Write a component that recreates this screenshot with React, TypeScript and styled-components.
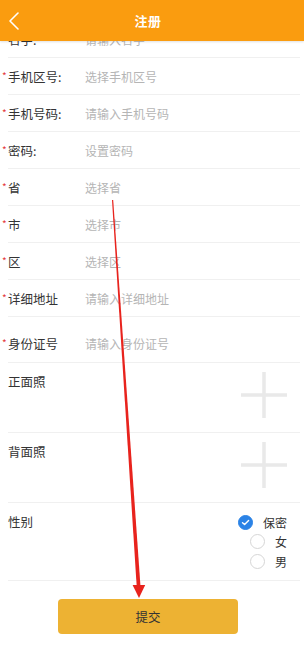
import React, { useState } from "react";
import styled, { createGlobalStyle } from "styled-components";

const GlobalStyle = createGlobalStyle`
  html, body {
    margin: 0;
    padding: 0;
    background: #fff;
  }
  body {
    font-family: "Noto Sans CJK SC", "Noto Sans", sans-serif;
    color: #333;
  }
  * {
    box-sizing: border-box;
  }
`;

const Page = styled.div`
  position: relative;
  width: 304px;
  height: 645px;
  overflow: hidden;
  background: #fff;
`;

const Header = styled.header`
  position: absolute;
  top: 0;
  left: 0;
  right: 0;
  height: 41px;
  z-index: 2;
  display: flex;
  align-items: center;
  justify-content: center;
  padding-right: 8px;
  background: #fa9c0f;
  box-shadow: 0 1px 2px rgba(0, 0, 0, 0.12);

  .title {
    color: #fff;
    font-size: 13px;
    font-weight: 700;
    letter-spacing: 0.5px;
  }
`;

const BackButton = styled.button`
  position: absolute;
  left: 5px;
  top: 9px;
  width: 20px;
  height: 24px;
  padding: 0;
  border: none;
  background: none;
  cursor: pointer;
`;

const Form = styled.div`
  padding-top: 21px;
`;

const Row = styled.div<{ tall?: boolean }>`
  display: flex;
  align-items: center;
  height: ${({ tall }) => (tall ? 46 : 37)}px;
  padding-top: ${({ tall }) => (tall ? 8 : 0)}px;
  margin: 0 4px 0 8px;
  border-bottom: 1px solid #f0f0f0;
`;

const Label = styled.label`
  position: relative;
  flex: 0 0 77px;
  font-size: 12.5px;
  color: #333;
  white-space: nowrap;
`;

const Star = styled.span`
  position: absolute;
  left: -6px;
  top: 1px;
  font-size: 10px;
  color: #e4393c;
`;

const Field = styled.input`
  flex: 1;
  min-width: 0;
  padding: 0;
  border: none;
  outline: none;
  background: transparent;
  font-family: inherit;
  font-size: 12px;
  color: #333;

  &::placeholder {
    color: #b5b5b5;
  }
`;

const BlockRow = styled.div<{ h: number }>`
  display: flex;
  justify-content: space-between;
  align-items: flex-start;
  height: ${({ h }) => h}px;
  margin: 0 4px 0 8px;
  border-bottom: 1px solid #f0f0f0;
`;

const BlockLabel = styled.span`
  padding-top: 10px;
  font-size: 12.5px;
  line-height: 18px;
  color: #333;
`;

const Upload = styled.button`
  width: 46px;
  height: 46px;
  margin: 9px 13px 0 0;
  padding: 0;
  border: none;
  background: none;
  cursor: pointer;
`;

const RadioGroup = styled.div`
  display: flex;
  flex-direction: column;
  align-items: flex-end;
  margin: 9.5px 13px 0 0;
`;

const RadioItem = styled.div`
  display: flex;
  align-items: center;
  height: 19.5px;
  font-size: 12px;
  color: #333;
  cursor: pointer;
`;

const RadioDot = styled.span<{ checked: boolean }>`
  display: flex;
  align-items: center;
  justify-content: center;
  width: 15px;
  height: 15px;
  margin-right: 10px;
  border-radius: 50%;
  border: 1px solid ${({ checked }) => (checked ? "#2b83e6" : "#d6d6d6")};
  background: ${({ checked }) => (checked ? "#2b83e6" : "#fff")};
`;

const Footer = styled.div`
  display: flex;
  justify-content: center;
  padding: 18px 8px 0 0;
`;

const SubmitButton = styled.button`
  width: 180px;
  height: 35px;
  border: none;
  border-radius: 4px;
  background: #edb233;
  font-family: inherit;
  font-size: 12.5px;
  color: #333;
  cursor: pointer;
`;

const Annotation = styled.svg`
  position: absolute;
  top: 0;
  left: 0;
  z-index: 3;
  pointer-events: none;
`;

const fields = [
  { label: "名字:", placeholder: "请输入名字", required: false },
  { label: "手机区号:", placeholder: "选择手机区号", required: true },
  { label: "手机号码:", placeholder: "请输入手机号码", required: true },
  { label: "密码:", placeholder: "设置密码", required: true },
  { label: "省", placeholder: "选择省", required: true },
  { label: "市", placeholder: "选择市", required: true },
  { label: "区", placeholder: "选择区", required: true },
  { label: "详细地址", placeholder: "请输入详细地址", required: true },
  { label: "身份证号", placeholder: "请输入身份证号", required: true, tall: true },
];

const genders = ["保密", "女", "男"];

const PlusIcon = () => (
  <svg width="46" height="46" viewBox="0 0 46 46">
    <path d="M0 23h46M23 0v46" stroke="#e9e9e9" strokeWidth="3.5" fill="none" />
  </svg>
);

const App = () => {
  const [gender, setGender] = useState("保密");

  return (
    <Page>
      <GlobalStyle />
      <Header>
        <BackButton aria-label="返回">
          <svg width="20" height="24" viewBox="0 0 20 24">
            <path
              d="M13 4L5 12L13 20"
              stroke="#fff"
              strokeWidth="1.6"
              fill="none"
              strokeLinecap="round"
              strokeLinejoin="round"
            />
          </svg>
        </BackButton>
        <span className="title">注册</span>
      </Header>

      <Form>
        {fields.map((f) => (
          <Row key={f.label} tall={f.tall}>
            <Label>
              {f.required && <Star>*</Star>}
              {f.label}
            </Label>
            <Field placeholder={f.placeholder} />
          </Row>
        ))}

        <BlockRow h={70}>
          <BlockLabel>正面照</BlockLabel>
          <Upload aria-label="上传正面照">
            <PlusIcon />
          </Upload>
        </BlockRow>
        <BlockRow h={70}>
          <BlockLabel>背面照</BlockLabel>
          <Upload aria-label="上传背面照">
            <PlusIcon />
          </Upload>
        </BlockRow>

        <BlockRow h={78}>
          <BlockLabel>性别</BlockLabel>
          <RadioGroup>
            {genders.map((g) => (
              <RadioItem key={g} onClick={() => setGender(g)}>
                <RadioDot checked={gender === g}>
                  {gender === g && (
                    <svg width="9" height="9" viewBox="0 0 9 9">
                      <path
                        d="M1.5 4.7L3.6 6.6L7.6 2.4"
                        stroke="#fff"
                        strokeWidth="1.4"
                        fill="none"
                        strokeLinecap="round"
                        strokeLinejoin="round"
                      />
                    </svg>
                  )}
                </RadioDot>
                {g}
              </RadioItem>
            ))}
          </RadioGroup>
        </BlockRow>

        <Footer>
          <SubmitButton>提交</SubmitButton>
        </Footer>
      </Form>

      <Annotation width="304" height="645" viewBox="0 0 304 645">
        <polygon points="112,200 113.2,200 140.6,588 136.8,588" fill="#e8231d" />
        <polygon points="132.6,585 145.2,585 139,598" fill="#e8231d" />
      </Annotation>
    </Page>
  );
};

export default App;
